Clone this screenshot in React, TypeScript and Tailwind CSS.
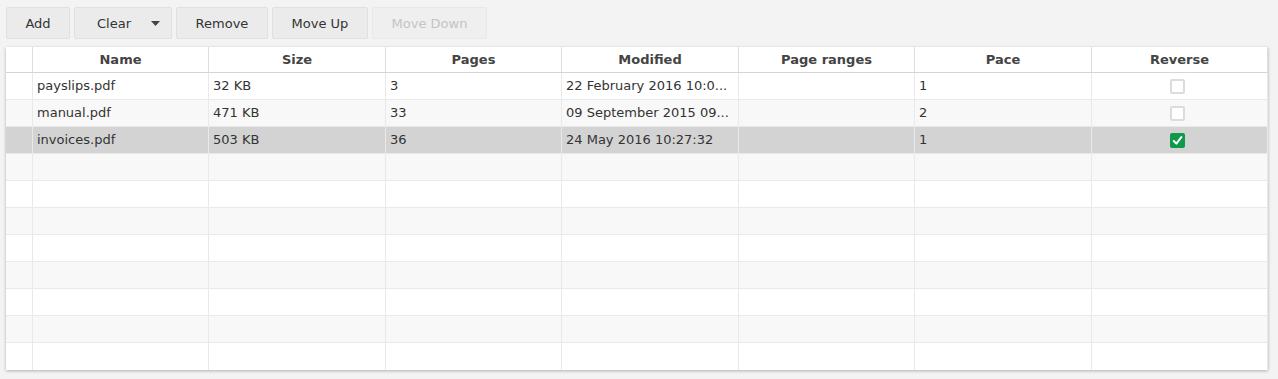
import React from "react";

const font = { fontFamily: '"DejaVu Sans", "Liberation Sans", sans-serif' };

type Row = { name: string; size: string; pages: string; modified: string; ranges: string; pace: string; reverse: boolean };

const rows: (Row | null)[] = [
  { name: "payslips.pdf", size: "32 KB", pages: "3", modified: "22 February 2016 10:0...", ranges: "", pace: "1", reverse: false },
  { name: "manual.pdf", size: "471 KB", pages: "33", modified: "09 September 2015 09...", ranges: "", pace: "2", reverse: false },
  { name: "invoices.pdf", size: "503 KB", pages: "36", modified: "24 May 2016 10:27:32", ranges: "", pace: "1", reverse: true },
  null, null, null, null, null, null, null, null,
];

const headers = ["", "Name", "Size", "Pages", "Modified", "Page ranges", "Pace", "Reverse"];
const gridCols = "grid grid-cols-[27px_176px_177px_176px_177px_176px_177px_176px]";

function CheckBox({ checked }: { checked: boolean }) {
  if (checked) {
    return (
      <div className="w-[15px] h-[15px] rounded-[2px] bg-[#0f9a4a] flex items-center justify-center">
        <svg width="11" height="11" viewBox="0 0 10 10">
          <path d="M1.6 5.4 L4 7.8 L8.5 1.9" fill="none" stroke="#ffffff" strokeWidth="1.8" strokeLinecap="round" strokeLinejoin="round" />
        </svg>
      </div>
    );
  }
  return <div className="w-[15px] h-[15px] rounded-[2px] border-2 border-[#dcdcdc] bg-white" />;
}

function Btn({ children, w, disabled }: { children: React.ReactNode; w: string; disabled?: boolean }) {
  return (
    <div
      className={`${w} h-[32px] pt-[1px] rounded-[2px] border flex items-center justify-center text-[13px] ${
        disabled ? "bg-[#efefef] text-[#c4c4c4] border-[#e8e8e8]" : "bg-[#ebebeb] text-[#333333] border-[#e0e0e0]"
      }`}
    >
      {children}
    </div>
  );
}

export default function App() {
  return (
    <div className="w-[1278px] h-[379px] bg-[#f3f3f3] pt-[7px] pl-[6px]" style={font}>
      <div className="flex gap-1">
        <Btn w="w-[64px]">Add</Btn>
        <div className="w-[98px] h-[32px] pt-[1px] rounded-[2px] border border-[#e0e0e0] bg-[#ebebeb] text-[#333333] text-[13px] flex items-center">
          <span className="ml-[22px]">Clear</span>
          <svg className="ml-[20px]" width="9" height="5" viewBox="0 0 9 5">
            <path d="M0 0 L9 0 L4.5 5 Z" fill="#444444" />
          </svg>
        </div>
        <Btn w="w-[92px]">Remove</Btn>
        <Btn w="w-[96px]">Move Up</Btn>
        <Btn w="w-[115px]" disabled>Move Down</Btn>
      </div>
      <div className="mt-[8px] w-[1262px] bg-white shadow-[0_1px_3px_rgba(0,0,0,0.28)] text-[13px]">
        <div className={`${gridCols} h-[26px] border-b border-[#d5d5d5]`}>
          {headers.map((h, i) => (
            <div key={i} className="border-r border-[#dedede] flex items-center justify-center pt-[1px] font-bold text-[#444444]">
              {h}
            </div>
          ))}
        </div>
        {rows.map((r, idx) => {
          const bg = idx === 2 ? "bg-[#d3d3d3]" : idx % 2 === 1 ? "bg-[#f8f8f8]" : "bg-white";
          const cells = r ? [r.name, r.size, r.pages, r.modified, r.ranges, r.pace] : ["", "", "", "", "", ""];
          return (
            <div key={idx} className={`${gridCols} h-[27px] ${idx < rows.length - 1 ? "border-b" : ""} border-[#e9e9e9] ${bg}`}>
              <div className="border-r border-[#e9e9e9]" />
              {cells.map((c, j) => (
                <div key={j} className="border-r border-[#e9e9e9] flex items-center pl-[4px] text-[#333333] whitespace-nowrap overflow-hidden">
                  {c}
                </div>
              ))}
              <div className="border-r border-[#e9e9e9] flex items-center justify-center pr-[5px]">
                {r ? <CheckBox checked={r.reverse} /> : null}
              </div>
            </div>
          );
        })}
      </div>
    </div>
  );
}
